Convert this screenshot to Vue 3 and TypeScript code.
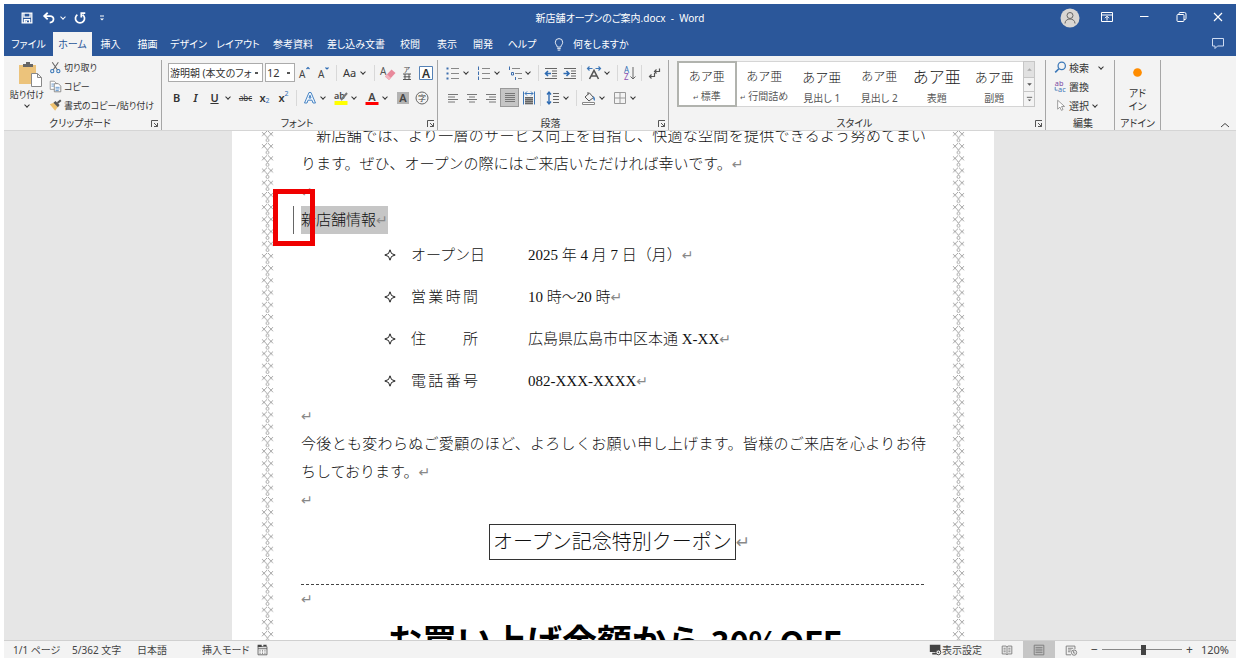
<script setup lang="ts">
import { ref } from 'vue'

interface StyleItem { name: string; mark?: boolean; kind: string }
interface InfoRow { label: string; value: string; spread?: boolean }

const tabs = ['ファイル', 'ホーム', '挿入', '描画', 'デザイン', 'レイアウト', '参考資料', '差し込み文書', '校閲', '表示', '開発', 'ヘルプ']
const activeTab = ref('ホーム')
const zoomLevel = ref(120)

const styleItems: StyleItem[] = [
  { name: '標準', mark: true, kind: 'body-text' },
  { name: '行間詰め', mark: true, kind: 'body-text' },
  { name: '見出し 1', kind: 'head1' },
  { name: '見出し 2', kind: 'head2' },
  { name: '表題', kind: 'headline' },
  { name: '副題', kind: 'sub' },
]
const activeStyle = ref('標準')

const infoRows: InfoRow[] = [
  { label: 'オープン日', value: '2025 年 4 月 7 日（月）' },
  { label: '営業時間', value: '10 時～20 時', spread: true },
  { label: '住所', value: '広島県広島市中区本通 X-XX', spread: true },
  { label: '電話番号', value: '082-XXX-XXXX', spread: true },
]

const bars = (x: number, w: number, ys: number[], c = '#666') =>
  ys.map((y) => `<path d="M${x} ${y}h${w}" stroke="${c}"/>`).join('')

const icons: Record<string, string> = {
  save: '<path d="M2.500 2.500h11v11h-11z M4.500 2.500v4.500h7V2.500 M5 13.500v-3.500h6v3.500" stroke="#fff" stroke-width="1.500"/><path d="M6 11h2v2.500H6z" fill="#fff"/>',
  undo: '<path d="M6.500 2L2.500 5.800l4 3.800 M2.800 5.800h6.500c5.500 0 5 7-0.500 7.500" stroke="#fff" stroke-width="2"/>',
  redo: '<path d="M5 4.200a5.200 5.200 0 1 0 6 0 M14 2.500H9.500v5" stroke="#fff" stroke-width="2"/>',
  ribbon: '<path d="M2.500 2.500h11v9h-11z M2.500 5h11 M8 10.500V6.500 M6 8.200l2-2 2 2" stroke="#fff"/>',
  min: '<path d="M4 6.500h8.500" stroke="#fff"/>',
  restore: '<path d="M4 5.500q0-1 1-1h5q1 0 1 1v5q0 1-1 1h-5q-1 0-1-1z M6 4.500V3.500q0-1 1-1h4.500q1.500 0 1.500 1.500V8.500q0 1-1 1H11" stroke="#fff"/>',
  close: '<path d="M4 3l8 8 M12 3l-8 8" stroke="#fff" stroke-width="1.200"/>',
  comment: '<path d="M2.500 2.500h11v7.500H7.500L5 12.500V10H2.500z" stroke="#cfdcf2"/>',
  bulb: '<path d="M6 11.500c0-2-2.200-2.800-2.200-5.500a4.200 4.200 0 0 1 8.400 0c0 2.700-2.200 3.500-2.200 5.500z M6 13.300h4 M6.500 15h3" stroke="#fff"/>',
  cut: '<path d="M4 1.500l6.500 9.500 M11.500 1.500L5 11" stroke="#666" stroke-width="1.300"/><circle cx="4" cy="12.500" r="2" stroke="#3b78b8" stroke-width="1.300"/><circle cx="11.500" cy="12.500" r="2" stroke="#3b78b8" stroke-width="1.300"/>',
  copy: '<path d="M1.500 1.500h5l2.500 2.500v7.500h-7.500z" fill="#fff" stroke="#8a8a8a"/><path d="M6.500 4.500h5l3 3v7h-8z" fill="#fff" stroke="#777"/><path d="M3 5h3 M3 7.500h3 M8 9h5 M8 11h5 M8 13h4" stroke="#4a86c5"/>',
  brush: '<path d="M1 6.500l5-2 5 5-3.500 5z" fill="#eec26f"/><path d="M5.500 4.500l2.500-2 5 5-2 2.500z" fill="#555"/><path d="M10.500 5l4-3.500" stroke="#555" stroke-width="2.500"/>',
  growA: '<text x="2" y="13" font-size="10" fill="#444">A</text><path d="M9.500 4l1.500-1.500L12.500 4" stroke="#2f6cb3" stroke-width="1.200"/>',
  shrinkA: '<text x="2" y="13" font-size="10" fill="#444">A</text><path d="M9.500 2.500L11 4l1.500-1.500" stroke="#2f6cb3" stroke-width="1.200"/>',
  erase: '<text x="0" y="10" font-size="10" fill="#555">A</text><path d="M5 11.500l6.500-7 4 3.500-6.500 7z" fill="#e8899b"/><path d="M5 11.500l2-2.200 4 3.600-2 2.100z" fill="#f3b3be"/>',
  ruby: '<text x="4.500" y="6.500" font-size="7" fill="#444">ア</text><path d="M4 9h8 M4 14.500h8 M6 9v5 M10 9v5 M4.500 11.800h7" stroke="#555"/>',
  boxA: '<path d="M1.500 1.500h13v13h-13z" fill="#fff" stroke="#5581b5"/><text x="8" y="12.500" font-size="12" text-anchor="middle" fill="#333" font-weight="600">A</text>',
  outA: '<path d="M2.500 13L7 2.500h2L13.500 13h-2.500l-1-2.800H6l-1 2.800z M7 8h2L8 5.200z" stroke="#4a86c5" fill="#eef5fc"/>',
  pen: '<text x="1" y="9" font-size="9" fill="#444" font-weight="600">ab</text><path d="M14 3l-6 7" stroke="#777" stroke-width="2"/><path d="M1.500 11h13v4h-13z" fill="#ff0"/>',
  redA: '<text x="8" y="11" font-size="11" text-anchor="middle" fill="#444" font-weight="600">A</text><path d="M1.500 12h13v3h-13z" fill="#f00"/>',
  shadeA: '<path d="M2 2h12v12H2z" fill="#b3b3b3"/><text x="8" y="12" font-size="11" text-anchor="middle" fill="#444" font-weight="600">A</text>',
  circ: '<circle cx="8" cy="8" r="6" stroke="#666"/><text x="8" y="11" font-size="8" text-anchor="middle" fill="#444">字</text>',
  bullets: bars(6, 8, [3.5, 8.5, 13.5], '#888') + '<path d="M1.500 2.500h2v2h-2z M1.500 7.500h2v2h-2z M1.500 12.500h2v2h-2z" fill="#3f6fae"/>',
  numbers: bars(6, 8, [3.5, 8.5, 13.5], '#888') + '<path d="M2.500 1.500v3.500 M2.500 6.500v3.500 M2.500 11.500v3.500" stroke="#3f6fae"/>',
  multi: '<path d="M5 3.500h8 M8 8.500h7 M11 13.500h4" stroke="#888"/><path d="M2.500 1.500v3.500 M4.500 7.500h2v2.500h-2z M8.500 12v3" stroke="#3f6fae"/>',
  outdent: bars(2, 12, [3.5, 13.5]) + bars(9, 5, [6, 8.5, 11]) + '<path d="M8 8.500H2.500 M5 6L2.500 8.500 5 11" stroke="#2f6cb3" stroke-width="1.600"/>',
  indent: bars(2, 12, [3.5, 13.5]) + bars(9, 5, [6, 8.5, 11]) + '<path d="M1.500 8.500H7 M4.500 6L7 8.500 4.500 11" stroke="#2f6cb3" stroke-width="1.600"/>',
  scaleA: '<path d="M3.500 14L8 5.500 12.500 14 M5.500 11h5" stroke="#555" stroke-width="1.600"/><path d="M1.500 3.500h5 M3.500 1.500l-2 2 2 2 M9.500 3.500h5 M12.500 1.500l2 2-2 2" stroke="#3f78b8" stroke-width="1.200"/>',
  sort: '<text x="2" y="8" font-size="8" fill="#2f6cb3">A</text><text x="2" y="15" font-size="8" fill="#8a4fb0">Z</text><path d="M11 2v12 M8.500 11.500L11 14l2.500-2.500" stroke="#666"/>',
  marks: '<path d="M13.500 3.500v3H8.500 M10.500 4.500l-2 2 2 2 M8.500 8v3.500H3.500 M5.500 9.500l-2 2 2 2" stroke="#555" stroke-width="1.200"/>',
  left: bars(3, 10, [4.5, 9.5], '#777') + bars(3, 7, [7, 12], '#777'),
  center: bars(3, 10, [4.5, 9.5], '#777') + bars(5, 6, [7, 12], '#777'),
  right: bars(3, 10, [4.5, 9.5], '#777') + bars(6, 7, [7, 12], '#777'),
  justify: bars(3, 10, [3.5, 5.5, 7.5, 9.5, 11.5], '#777'),
  distribute: '<path d="M2.500 1.500v13 M13.500 1.500v13 M4 3.500h8 M6 1.500l-2 2 2 2 M10 1.500l2 2-2 2" stroke="#3f78b8"/><path d="M4 7h8v7.500H4z" fill="#999"/>' + bars(4, 8, [7.5, 9.5, 11.5, 13.5]),
  spacing: '<path d="M4 2v12 M2 4.500L4 2l2 2.500 M2 11.500L4 14l2-2.500" stroke="#2f6cb3" stroke-width="1.400"/>' + bars(8, 6, [3.5, 6.5, 9.5, 12.5]),
  bucket: '<path d="M4 7l4.500-4 4 4.500-4.500 3.500z M7 4.500V2" stroke="#555"/><path d="M12 6c2 1 2.500 3 1.500 5-1-1-1.500-2-1.500-5z" fill="#3f78b8"/><path d="M1.500 12.500h12v2h-12z" fill="#fff" stroke="#888"/>',
  border: '<path d="M2.500 2.500h11v11h-11z M8 2.500v11 M2.500 8h11" stroke="#999"/>',
  find: '<circle cx="9.500" cy="6" r="4.500" stroke="#3b78b8" stroke-width="1.500"/><path d="M6 9.500L1.500 14" stroke="#3b78b8" stroke-width="2"/>',
  replace: '<text x="1" y="7" font-size="9" fill="#7b4aa3">ab</text><text x="5" y="15" font-size="9" fill="#3f78b8">ac</text><path d="M1.500 8.500v4h3" stroke="#3f78b8"/>',
  select: '<path d="M4.500 1.500v11l2.800-2.500 1.800 4 2-1-1.800-3.800h3.700z" fill="#fff" stroke="#888"/>',
  calendar: '<path d="M2.500 4.500h11v10h-11z M2.500 7h11" stroke="#555"/><path d="M5 8.500v5 M8 8.500v5 M11 8.500v5" stroke="#555" stroke-dasharray="1 1"/><path d="M2 2h5v3H2z M9 2h4v2H9z" fill="#444"/>',
  display: '<path d="M1 2h13v9H1z M4 12h5v2H4z" fill="#444"/><circle cx="11.500" cy="11.500" r="3" fill="#f3f3f3" stroke="#444" stroke-width="1.200"/><circle cx="11.500" cy="11.500" r="1" fill="#444"/>',
  read: '<path d="M2.500 3.500h4.500l1 1 1-1h4.500v9H9l-1 1-1-1H2.500z M8 4.500v9 M4 6h2.500 M4 8h2.500 M4 10h2.500 M9.500 6H12 M9.500 8H12 M9.500 10H12" stroke="#777"/>',
  print: '<path d="M2.500 2.500h11v11h-11z" stroke="#777"/>' + bars(4, 8, [5, 7, 9, 11], '#777'),
  web: '<path d="M8 13.500H2.500v-10h10V7 M4.500 6h6 M4.500 8h4 M4.500 10h3" stroke="#777"/><circle cx="11.500" cy="11" r="3" stroke="#777"/><path d="M11 9v2.500h2" stroke="#777"/>',
}
</script>

<template>
  <div class="app">
    <header>
      <div class="titlebar">
        <div class="quick">
          <button class="q" aria-label="上書き保存"><svg class="ic" viewBox="0 0 16 16" v-html="icons.save" /></button>
          <button class="q" aria-label="元に戻す"><svg class="ic" viewBox="0 0 16 16" v-html="icons.undo" /></button>
          <button class="qc" aria-label="元に戻すの一覧"><i class="caret" /></button>
          <button class="q" aria-label="繰り返し"><svg class="ic" viewBox="0 0 16 16" v-html="icons.redo" /></button>
          <button class="q more" aria-label="カスタマイズ"><svg viewBox="0 0 8 8"><path d="M2 2h4" stroke="#fff" /><path d="M2 4.500h4L4 6.500z" fill="#fff" /></svg></button>
        </div>
        <div class="title">新店舗オープンのご案内.docx&nbsp; -&nbsp; Word</div>
        <div class="wincontrols">
          <button class="avatar" aria-label="アカウント"><svg viewBox="0 0 20 20"><circle cx="10" cy="10" r="9.500" fill="#d9d6d3" /><circle cx="10" cy="7.500" r="3" fill="none" stroke="#666" /><path d="M5 15.500c0-6 10-6 10 0" fill="none" stroke="#666" /></svg></button>
          <button v-for="k in ['ribbon', 'min', 'restore', 'close']" :key="k" class="w" :aria-label="k"><svg class="ic" viewBox="0 0 16 16" v-html="icons[k]" /></button>
        </div>
      </div>
      <div class="tabrow">
        <nav class="tabs">
          <button v-for="t in tabs" :key="t" :class="{ active: t === activeTab }" @click="activeTab = t">{{ t }}</button>
        </nav>
        <button class="tell"><svg class="ic" viewBox="0 0 16 16" v-html="icons.bulb" />何をしますか</button>
        <button class="w comment" aria-label="コメント"><svg class="ic" viewBox="0 0 16 16" v-html="icons.comment" /></button>
      </div>
    </header>

    <div class="ribbon">
      <section class="group clipboard">
        <div class="body clip">
          <button class="paste">
            <svg viewBox="0 0 26 26"><rect x="2" y="4" width="17" height="19" fill="#ecc37b" /><path d="M6 6V3h3V1h4v2h3v3z" fill="#666" /><path d="M14.500 12.500h6l4 4v9h-10z M20.500 12.500v4h4" fill="#fff" stroke="#888" /></svg>
            <span>貼り付け</span><i class="caret" />
          </button>
          <div class="cliplist">
            <button><svg class="ic s" viewBox="0 0 16 16" v-html="icons.cut" />切り取り</button>
            <button><svg class="ic s" viewBox="0 0 16 16" v-html="icons.copy" />コピー</button>
            <button><svg class="ic s" viewBox="0 0 16 16" v-html="icons.brush" />書式のコピー/貼り付け</button>
          </div>
        </div>
        <footer><span>クリップボード</span><button class="launch" aria-label="クリップボードの設定"><svg viewBox="0 0 8 8"><path d="M.5 7V.5H7 M3 3l3.500 3.500 M6.500 3v3.500H3" /></svg></button></footer>
      </section>

      <section class="group font">
        <div class="body">
          <div class="row">
            <select class="fname" aria-label="フォント"><option>游明朝 (本文のフォント)</option></select>
            <select class="fsize" aria-label="フォント サイズ"><option>12</option></select>
            <button v-for="k in ['growA', 'shrinkA']" :key="k" class="t" :aria-label="k"><svg class="ic" viewBox="0 0 16 16" v-html="icons[k]" /></button>
            <i class="sep" />
            <button class="split aa">Aa<i class="caret" /></button>
            <i class="sep" />
            <button v-for="k in ['erase', 'ruby', 'boxA']" :key="k" class="t" :aria-label="k"><svg class="ic" viewBox="0 0 16 16" v-html="icons[k]" /></button>
          </div>
          <div class="row">
            <button class="t"><b>B</b></button>
            <button class="t"><b><em>I</em></b></button>
            <button class="split"><span class="g"><b><u>U</u></b></span><i class="caret" /></button>
            <button class="t small"><s>abc</s></button>
            <button class="t"><b>x</b><sub>2</sub></button>
            <button class="t"><b>x</b><sup>2</sup></button>
            <i class="sep" />
            <button v-for="k in ['outA', 'pen', 'redA']" :key="k" class="split" :aria-label="k"><span class="g"><svg class="ic" viewBox="0 0 16 16" v-html="icons[k]" /></span><i class="caret" /></button>
            <button v-for="k in ['shadeA', 'circ']" :key="k" class="t" :aria-label="k"><svg class="ic" viewBox="0 0 16 16" v-html="icons[k]" /></button>
          </div>
        </div>
        <footer><span>フォント</span><button class="launch" aria-label="フォントの設定"><svg viewBox="0 0 8 8"><path d="M.5 7V.5H7 M3 3l3.500 3.500 M6.500 3v3.500H3" /></svg></button></footer>
      </section>

      <section class="group para">
        <div class="body">
          <div class="row">
            <button v-for="k in ['bullets', 'numbers', 'multi']" :key="k" class="split" :aria-label="k"><span class="g"><svg class="ic" viewBox="0 0 16 16" v-html="icons[k]" /></span><i class="caret" /></button>
            <i class="sep" />
            <button v-for="k in ['outdent', 'indent']" :key="k" class="t" :aria-label="k"><svg class="ic" viewBox="0 0 16 16" v-html="icons[k]" /></button>
            <i class="sep" />
            <button class="split" aria-label="拡張書式"><span class="g"><svg class="ic" viewBox="0 0 16 16" v-html="icons.scaleA" /></span><i class="caret" /></button>
            <i class="sep" />
            <button class="t" aria-label="並べ替え"><svg class="ic" viewBox="0 0 16 16" v-html="icons.sort" /></button>
            <i class="sep" />
            <button class="t" aria-label="編集記号"><svg class="ic" viewBox="0 0 16 16" v-html="icons.marks" /></button>
          </div>
          <div class="row">
            <button v-for="k in ['left', 'center', 'right', 'justify', 'distribute']" :key="k" class="t" :class="{ on: k === 'justify' }" :aria-label="k"><svg class="ic" viewBox="0 0 16 16" v-html="icons[k]" /></button>
            <i class="sep" />
            <button class="split" aria-label="行間"><span class="g"><svg class="ic" viewBox="0 0 16 16" v-html="icons.spacing" /></span><i class="caret" /></button>
            <i class="sep" />
            <button v-for="k in ['bucket', 'border']" :key="k" class="split" :aria-label="k"><span class="g"><svg class="ic" viewBox="0 0 16 16" v-html="icons[k]" /></span><i class="caret" /></button>
          </div>
        </div>
        <footer><span>段落</span><button class="launch" aria-label="段落の設定"><svg viewBox="0 0 8 8"><path d="M.5 7V.5H7 M3 3l3.500 3.500 M6.500 3v3.500H3" /></svg></button></footer>
      </section>

      <section class="group styles">
        <div class="body gallery">
          <div class="items">
            <button v-for="s in styleItems" :key="s.name" class="style" :class="[s.kind, { chosen: s.name === activeStyle }]" @click="activeStyle = s.name">
              <span class="sample">あア亜</span>
              <span class="sname"><small v-if="s.mark">↵ </small>{{ s.name }}</span>
            </button>
          </div>
          <div class="scroll">
            <button class="off" aria-label="上へ"><svg viewBox="0 0 6 6"><path d="M1 4h4L3 2z" fill="#aaa" /></svg></button>
            <button aria-label="下へ"><svg viewBox="0 0 6 6"><path d="M1 2h4L3 4z" fill="#555" /></svg></button>
            <button aria-label="その他"><svg viewBox="0 0 8 8"><path d="M1 1.500h6" stroke="#555" /><path d="M2 4h4L4 6z" fill="#555" /></svg></button>
          </div>
        </div>
        <footer><span>スタイル</span><button class="launch" aria-label="スタイルの設定"><svg viewBox="0 0 8 8"><path d="M.5 7V.5H7 M3 3l3.500 3.500 M6.500 3v3.500H3" /></svg></button></footer>
      </section>

      <section class="group edit">
        <div class="body cliplist">
          <button><svg class="ic s" viewBox="0 0 16 16" v-html="icons.find" />検索<i class="caret far" /></button>
          <button><svg class="ic s" viewBox="0 0 16 16" v-html="icons.replace" />置換</button>
          <button><svg class="ic s" viewBox="0 0 16 16" v-html="icons.select" />選択<i class="caret" /></button>
        </div>
        <footer><span>編集</span></footer>
      </section>

      <section class="group addin">
        <button class="body addbtn"><svg viewBox="0 0 12 12"><circle cx="6" cy="6" r="4" fill="#ff8c00" /></svg><span>アド<br>イン</span></button>
        <footer><span>アドイン</span></footer>
      </section>
      <button class="collapse" aria-label="リボンを折りたたむ"><svg viewBox="0 0 10 6"><path d="M1 5l4-3.500L9 5" fill="none" stroke="#444" /></svg></button>
    </div>

    <main>
      <article class="page">
        <svg class="edge" aria-hidden="true">
          <defs>
            <pattern id="lattice" width="13" height="12.200" patternUnits="userSpaceOnUse">
              <path d="M1 1l4 4 M5 1l-4 4 M8 1l4 4 M12 1l-4 4 M5 5l1.500 2 1.500-2 M5 1l1.500-1.500L8 1" fill="none" stroke="#999" stroke-width=".9" />
              <circle cx="6.500" cy="9.300" r="1.500" fill="none" stroke="#999" stroke-width=".8" />
            </pattern>
          </defs>
          <rect width="13" height="100%" fill="url(#lattice)" />
        </svg>
        <div class="text">
          <p class="just">　新店舗では、より一層のサービス向上を目指し、快適な空間を提供できるよう努めてまいります。ぜひ、オープンの際にはご来店いただければ幸いです。<i class="ret">↵</i></p>
          <p><i class="ret">↵</i></p>
          <p class="selected"><span>新店舗情報<i class="ret">↵</i></span><i class="callout" /></p>
          <ul>
            <li v-for="r in infoRows" :key="r.label">
              <svg viewBox="0 0 12 12"><path d="M6 .8L7.500 4.500 11.200 6 7.500 7.500 6 11.200 4.500 7.500.8 6 4.500 4.500z" fill="none" stroke="#222" /></svg>
              <span class="label" :class="{ spread: r.spread }">{{ r.label }}</span>
              <span>{{ r.value }}<i class="ret">↵</i></span>
            </li>
          </ul>
          <p><i class="ret">↵</i></p>
          <p class="just">今後とも変わらぬご愛顧のほど、よろしくお願い申し上げます。皆様のご来店を心よりお待ちしております。<i class="ret">↵</i></p>
          <p><i class="ret">↵</i></p>
          <h2><span>オープン記念特別クーポン</span><i class="ret">↵</i></h2>
          <svg class="dash" aria-hidden="true"><path d="M0 .5h2000" stroke="#444" stroke-dasharray="3 2" /></svg>
          <p><i class="ret">↵</i></p>
          <h1>お買い上げ金額から <span>30%OFF</span><i class="ret">↵</i></h1>
        </div>
        <svg class="edge" aria-hidden="true"><rect width="13" height="100%" fill="url(#lattice)" /></svg>
      </article>
    </main>

    <div class="status">
      <span class="s1">1/1 ページ</span><span class="s2">5/362 文字</span><span class="s3">日本語</span><span class="s4">挿入モード</span>
      <button aria-label="マクロの記録"><svg class="ic s" viewBox="0 0 16 16" v-html="icons.calendar" /></button>
      <button class="disp"><svg class="ic s" viewBox="0 0 16 16" v-html="icons.display" />表示設定</button>
      <button class="v" aria-label="閲覧モード"><svg class="ic" viewBox="0 0 16 16" v-html="icons.read" /></button>
      <button class="v cur" aria-label="印刷レイアウト"><svg class="ic" viewBox="0 0 16 16" v-html="icons.print" /></button>
      <button class="v" aria-label="Web レイアウト"><svg class="ic" viewBox="0 0 16 16" v-html="icons.web" /></button>
      <button class="pm" aria-label="縮小" @click="zoomLevel -= 10">−</button>
      <input v-model.number="zoomLevel" type="range" min="10" max="220" aria-label="ズーム">
      <button class="pm" aria-label="拡大" @click="zoomLevel += 10">+</button>
      <span class="pct">{{ zoomLevel }}%</span>
    </div>
  </div>
</template>

<style>
body { margin: 0; background: #fff; }
</style>

<style scoped>
* { box-sizing: border-box; }
.app { height: 100vh; padding: 4px 5px 5px 4px; display: flex; flex-direction: column; font: 10px/14px "Noto Sans", "Noto Sans CJK JP", sans-serif; font-feature-settings: "palt"; color: #333; white-space: nowrap; }
button { border: 0; padding: 0; margin: 0; background: none; font: inherit; font-feature-settings: inherit; color: inherit; display: flex; align-items: center; justify-content: center; }
svg { display: block; flex: none; }
.ic { width: 16px; height: 16px; fill: none; overflow: visible; font-family: "Noto Sans", "Noto Sans CJK JP", sans-serif; }
.ic.s { width: 13px; height: 13px; }
.caret { width: 4px; height: 4px; border: solid currentColor; border-width: 0 1px 1px 0; transform: rotate(45deg); flex: none; margin: -2px 2px 0; }
header { background: #2b579a; color: #fff; }
.titlebar { height: 28px; display: grid; grid-template-columns: 1fr auto 1fr; align-items: center; }
.quick, .wincontrols { display: flex; align-items: center; }
.quick { padding-left: 10px; }
.q { width: 26px; }
.quick .q .ic { width: 14px; height: 14px; }
.q:nth-child(2) { width: 18px; }
.qc { width: 9px; }
.quick .more { width: 18px; }
.more svg { width: 8px; height: 8px; }
.wincontrols { justify-content: flex-end; }
.avatar { margin-right: 8px; }
.avatar svg { width: 20px; height: 20px; }
.w { width: 37px; }
.tabrow { height: 24px; display: flex; align-items: stretch; }
.tabs { display: grid; grid-template-columns: 49px 39px 37px 37px 45px 54px 56px 70px 38px 36px 36px 42px; }
.tabs .active { background: #f3f3f3; color: #2b579a; }
.tell { gap: 7px; padding-left: 9px; }
.tell .ic { width: 14px; height: 14px; }
.comment { margin-left: auto; }

.ribbon { display: flex; background: #f3f3f3; height: 75px; padding: 4px 0 0; border-bottom: 1px solid #d5d5d5; flex: none; }
.group { display: flex; flex-direction: column; border-right: 1px solid #a6a6a6; padding: 0 2px 0 5px; flex: none; }
.body { flex: 1; min-height: 0; }
footer { display: flex; height: 13px; align-items: center; line-height: 13px; }
footer span { flex: 1; text-align: center; }
.launch { width: 8px; height: 10px; }
.launch svg { width: 8px; height: 8px; fill: none; stroke: #555; }
.clipboard { width: 158px; }
.font { width: 276px; }
.para { width: 231px; }
.styles { width: 377px; }
.edit { width: 69px; padding-left: 8px; }
.addin { width: 46px; padding-right: 5px; }
.clip { display: flex; gap: 4px; font-size: 9px; }
.paste { flex-direction: column; justify-content: flex-start; width: 36px; }
.paste svg { width: 26px; height: 26px; margin: 1px 0 1px 6px; }
.paste .caret { margin-top: 1px; }
.cliplist { display: flex; flex-direction: column; margin-top: -2px; }
.cliplist button { height: 19px; flex: none; gap: 2px; justify-content: flex-start; }
.far { margin-left: 8px; }
.row { display: flex; align-items: center; height: 19px; margin-top: 4px; }
.row:first-child { margin-top: 3px; }
.row + .row { margin-top: 6px; }
.row select { appearance: none; height: 19px; border: 1px solid #ababab; border-radius: 0; font: inherit; color: #333; padding: 0 10px 0 1px; background: #fff linear-gradient(#555, #555) right 4px center / 3px 2px no-repeat; overflow: hidden; font-feature-settings: inherit; }
.row .fname { width: 95px; margin-left: 1px; }
.row .fsize { width: 31px; margin-left: 2px; font-size: 11px; }
.t, .g { width: 19px; height: 19px; display: flex; align-items: center; justify-content: center; flex: none; font-size: 11px; }
.t sub, .t sup { font-size: 7px; line-height: 7px; color: #2f6cb3; }
.t sub { align-self: flex-end; margin-bottom: 3px; }
.t sup { align-self: flex-start; margin-top: 2px; }
b { font-weight: 600; }
.t.small { font-size: 8px; }
.split { width: 31px; height: 19px; justify-content: flex-start; flex: none; font-size: 11px; }
.aa { padding-left: 3px; gap: 3px; }
.sep { width: 1px; height: 16px; background: #d8d8d8; margin: 0 2px; flex: none; }
.font .sep { margin: 0 3px; }
.on { background: #c5c5c5; outline: 1px solid #999; outline-offset: -1px; }
.gallery { display: flex; padding: 1px 8px 0 3px; }
.items { flex: 1; height: 46px; display: grid; grid-template-columns: repeat(6, 1fr); background: #fff; border: 1px solid #d5d5d5; border-right: 0; }
.style { flex-direction: column; justify-content: space-between; padding: 4px 0 1px; color: #555; }
.chosen { outline: 2px solid #b1b3ae; outline-offset: -1px; }
.sample { height: 22px; line-height: 22px; font-size: 12px; color: #222; font-weight: 300; font-feature-settings: normal; }
.head1 .sample, .sub .sample { font-size: 13px; }
.headline .sample { font-size: 16px; }
.sname small { font-size: 7px; }
.scroll { width: 12px; height: 46px; display: grid; grid-template-rows: repeat(3, 1fr); border: 1px solid #c6c6c6; }
.scroll button + button { border-top: 1px solid #c6c6c6; }
.scroll svg { width: 7px; height: 7px; }
.scroll .off { background: #e1e1e1; }
.addbtn { flex-direction: column; justify-content: flex-start; padding-top: 6px; gap: 8px; line-height: 13px; width: 100%; }
.addbtn svg { width: 13px; height: 13px; }
.collapse { margin-left: auto; align-self: flex-end; width: 22px; height: 10px; }
.collapse svg { width: 10px; height: 6px; }

main { flex: 1; min-height: 0; overflow: hidden; background: #e6e6e6; padding-right: 14px; display: flex; justify-content: center; }
.page { width: 762px; background: #fff; display: flex; padding: 0 29px; font-family: "Liberation Serif", "Noto Sans CJK JP", serif; font-feature-settings: normal; font-size: 15px; line-height: 28px; color: #111; font-weight: 300; }
.edge { width: 13px; height: 100%; }
.text { flex: 1; margin: -9px 26px 0 27px; white-space: normal; min-width: 0; }
p, ul, h1, h2 { margin: 0; padding: 0; }
p { height: 28px; }
p.just { height: auto; text-align: justify; }
.ret { font: normal 14px/14px "DejaVu Sans", sans-serif; color: #888; }
.selected { position: relative; display: flex; }
.selected span { background: #c6c6c6; }
.selected::before { content: ""; position: absolute; left: -8px; top: 0; width: 1px; height: 28px; background: #666; }
.callout { position: absolute; left: -28px; top: -17px; width: 42px; height: 57px; border: 5px solid #f00000; }
li { height: 42px; padding-left: 83px; display: grid; grid-template-columns: 27px 117px auto; align-items: center; }
li svg { width: 12px; height: 12px; }
.label.spread { width: 67px; text-align-last: justify; }
h2 { display: flex; justify-content: center; align-items: center; margin: 10px 0 24px 12px; font-size: 20px; font-weight: 300; line-height: 34px; }
h2 span { border: 1px solid #333; padding: 0 3px; height: 36px; }
h2 .ret { font-size: 17px; }
.dash { width: 100%; height: 1px; }
h1 { text-align: center; font-size: 35px; line-height: 42px; margin-top: 7px; padding-left: 20px; font-weight: 700; color: #000; white-space: nowrap; }
h1 .ret { font-size: 22px; }
h1 span { font-family: "Noto Sans CJK JP", sans-serif; font-size: 32px; }

.status { height: 18px; flex: none; background: #f3f3f3; border-top: 1px solid #d0d0d0; display: flex; align-items: center; padding: 0 7px 0 9px; color: #444; }
.s1 { width: 59px; }
.s2 { width: 65px; }
.s3 { width: 65px; }
.s4 { width: 54px; }
.disp { margin-left: auto; margin-right: 9px; }
.v { width: 32px; height: 17px; }
.v .ic { width: 14px; height: 14px; }
.cur { background: #c6c6c6; }
.pm { width: 15px; font-size: 12px; }
input[type="range"] { appearance: none; width: 80px; height: 12px; margin: 0; background: linear-gradient(#888, #888) center / 100% 1px no-repeat; }
input[type="range"]::-webkit-slider-thumb { appearance: none; width: 5px; height: 10px; background: #444; }
.pct { width: 32px; text-align: right; font-size: 11px; }
</style>
